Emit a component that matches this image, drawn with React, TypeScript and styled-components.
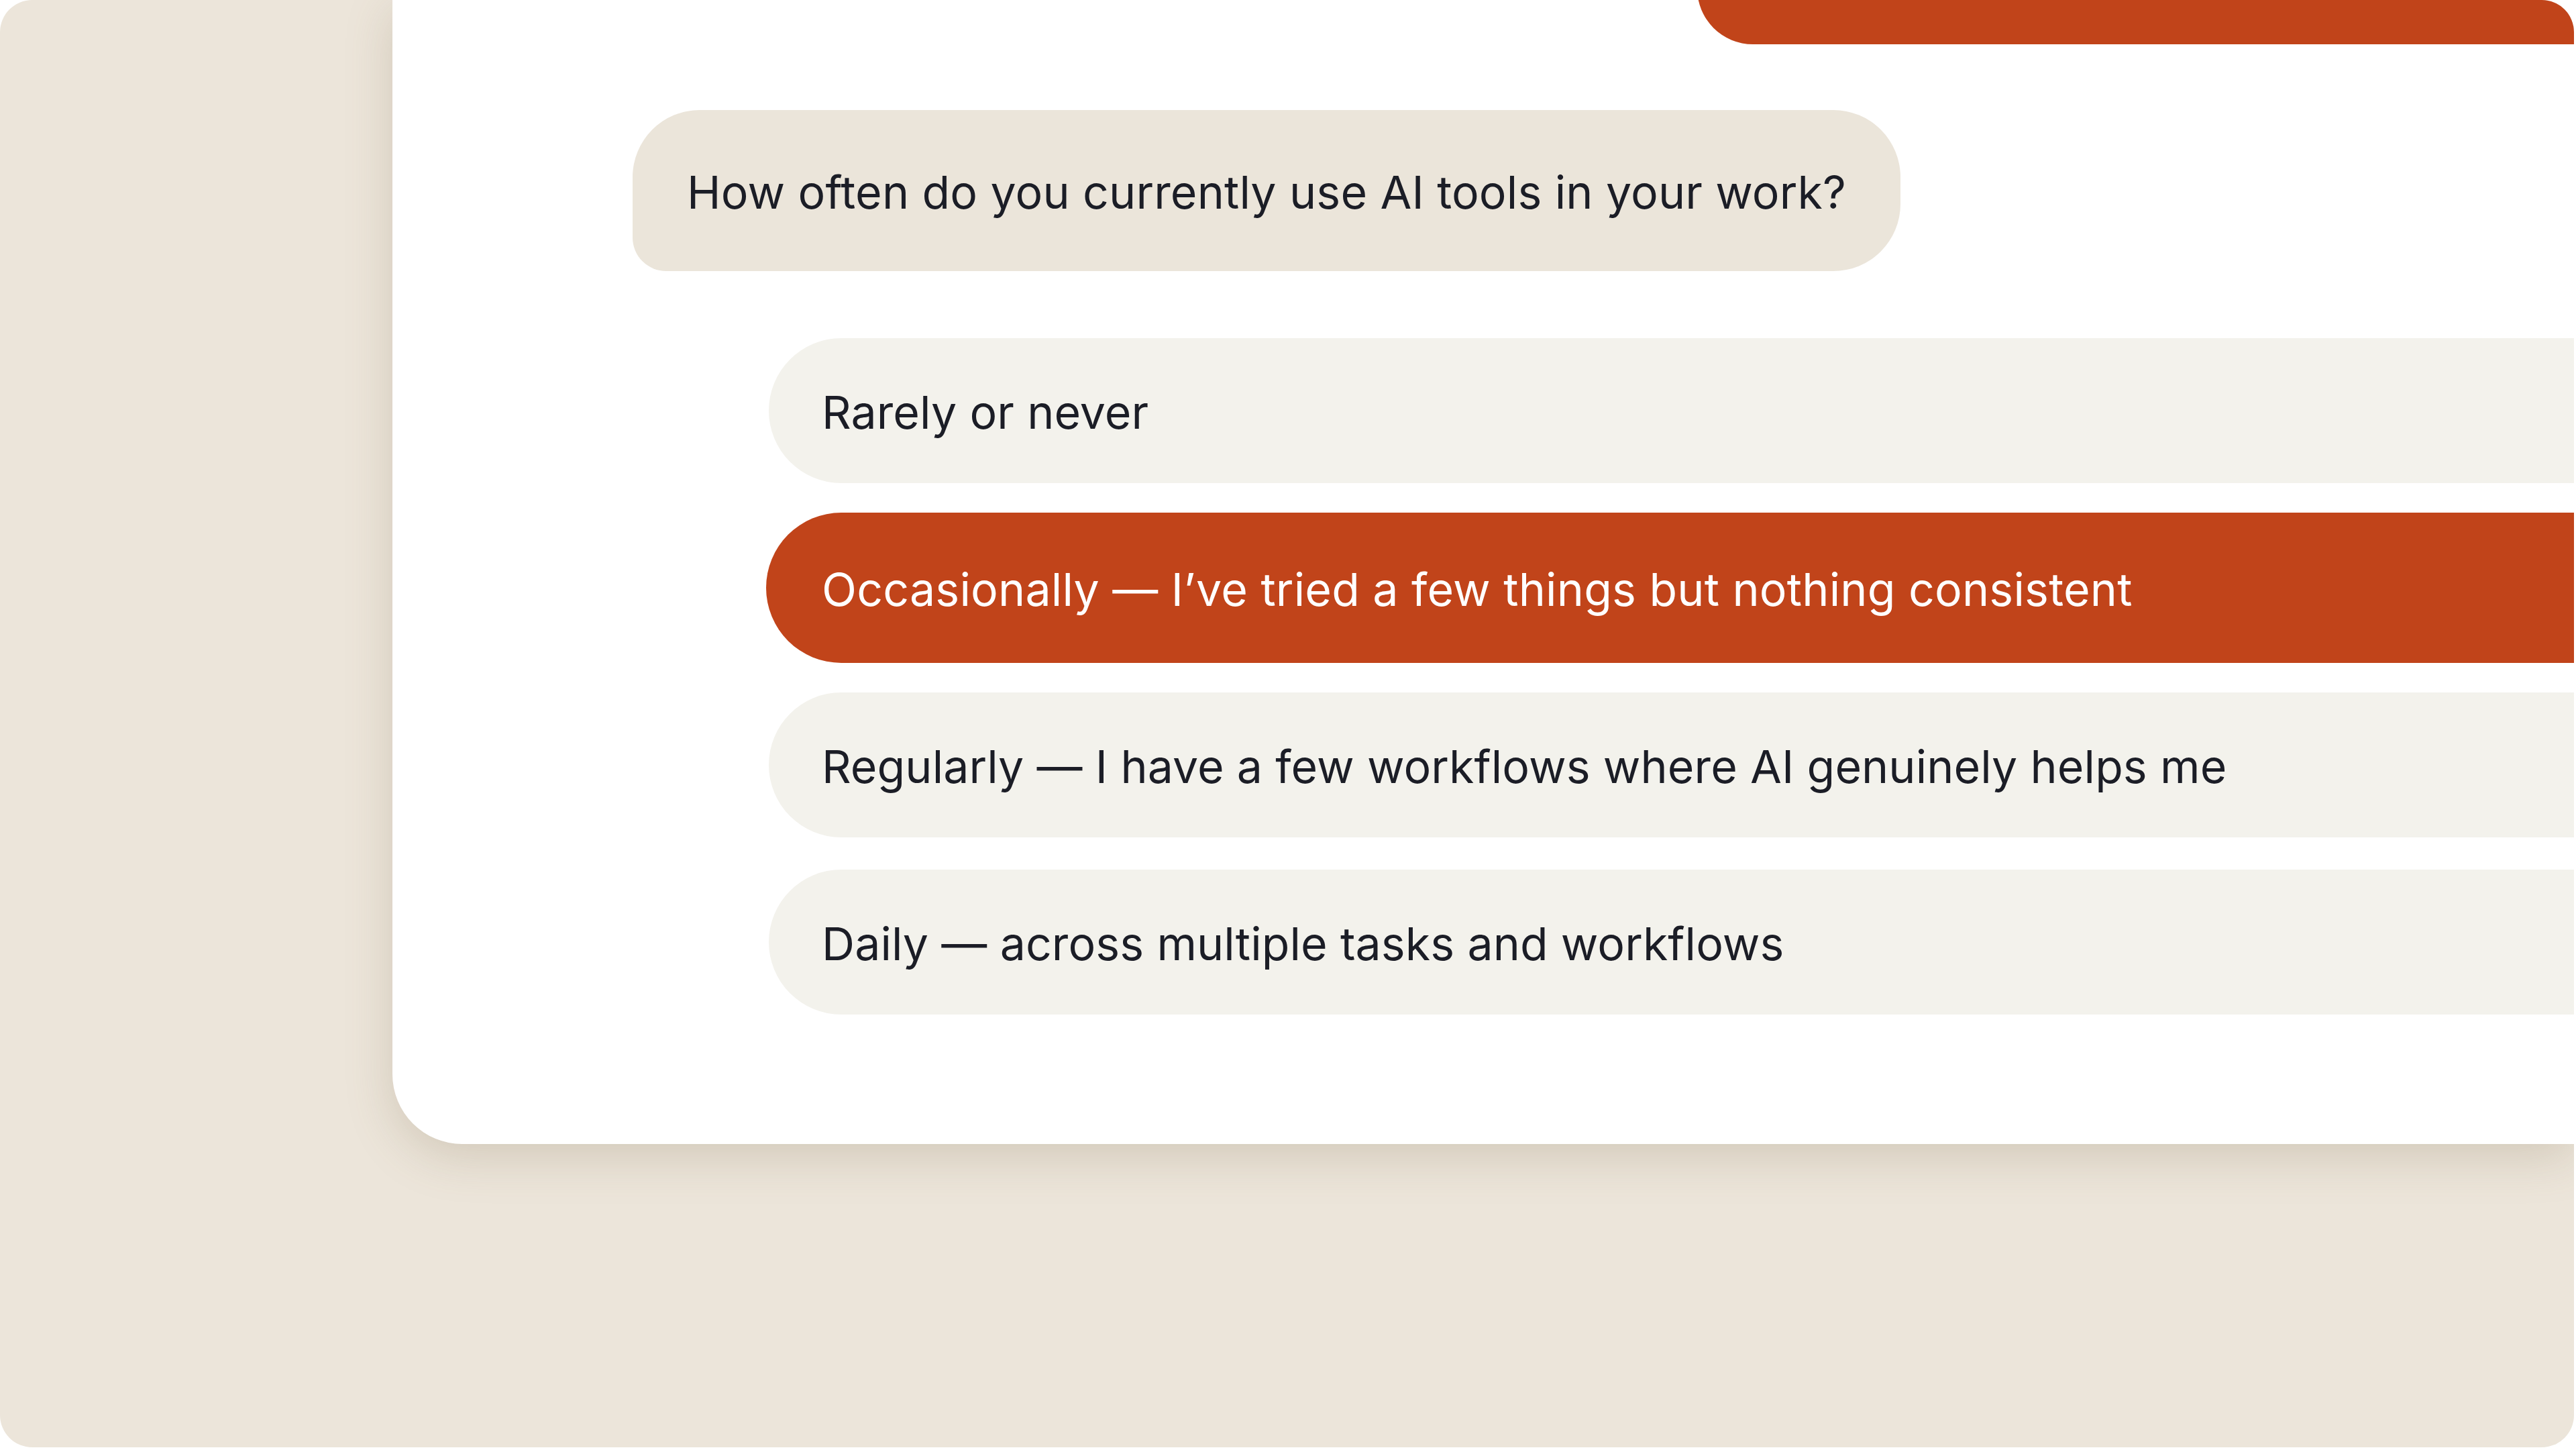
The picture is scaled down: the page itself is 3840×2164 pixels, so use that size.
import React from "react";
import styled, { createGlobalStyle } from "styled-components";

const GlobalStyle = createGlobalStyle`
  html, body {
    margin: 0;
    padding: 0;
    background: #ffffff;
  }
  * {
    box-sizing: border-box;
  }
`;

const Panel = styled.div`
  width: 3837px;
  height: 2157px;
  background: #ece5da;
  border-radius: 48px;
  overflow: hidden;
  display: flex;
  align-items: flex-start;
`;

const Card = styled.section`
  margin-left: 585px;
  flex: 1;
  height: 1705px;
  background: #ffffff;
  border-bottom-left-radius: 104px;
  box-shadow: 0 18px 70px rgba(120, 100, 70, 0.22);
  overflow: hidden;
  display: flex;
  flex-direction: column;
  font-family: Inter, "Noto Sans", sans-serif;
  color: #1b1d26;
`;

/* tail of the previous reply, scrolled mostly out of view */
const PrevReply = styled.div`
  align-self: flex-end;
  width: 1507px;
  height: 166px;
  margin-top: -100px;
  margin-right: -200px;
  background: #c1441a;
  border-radius: 100px;
  flex-shrink: 0;
`;

const Question = styled.div`
  align-self: flex-start;
  margin-top: 98px;
  margin-left: 358px;
  height: 240px;
  padding: 4px 81px 0;
  display: flex;
  align-items: center;
  background: #ebe5da;
  border-radius: 100px 100px 100px 50px;
  font-size: 68px;
  letter-spacing: 0.15px;
  white-space: nowrap;
  flex-shrink: 0;
`;

const Options = styled.div`
  margin-top: 100px;
  margin-left: 561px;
  margin-right: -200px;
  display: flex;
  flex-direction: column;
  gap: 48px;
`;

const Option = styled.div<{ $selected?: boolean }>`
  height: ${(p) => (p.$selected ? 224 : 216)}px;
  margin: ${(p) => (p.$selected ? "-4px 0 -4px -4px" : "0")};
  padding-left: ${(p) => (p.$selected ? 83 : 79)}px;
  padding-top: 4px;
  display: flex;
  align-items: center;
  border-radius: 112px;
  background: ${(p) => (p.$selected ? "#c1441a" : "#f3f2ec")};
  color: ${(p) => (p.$selected ? "#ffffff" : "#1b1d26")};
  font-size: 68px;
  letter-spacing: ${(p) => (p.$selected ? 0.2 : 0.08)}px;
  white-space: nowrap;
`;

const answers = [
  "Rarely or never",
  "Occasionally — I’ve tried a few things but nothing consistent",
  "Regularly — I have a few workflows where AI genuinely helps me",
  "Daily — across multiple tasks and workflows",
];

export default function App() {
  const selected = 1;
  return (
    <>
      <GlobalStyle />
      <Panel>
        <Card>
          <PrevReply />
          <Question>How often do you currently use AI tools in your work?</Question>
          <Options>
            {answers.map((a, i) => (
              <Option key={a} $selected={i === selected}>
                {a}
              </Option>
            ))}
          </Options>
        </Card>
      </Panel>
    </>
  );
}
